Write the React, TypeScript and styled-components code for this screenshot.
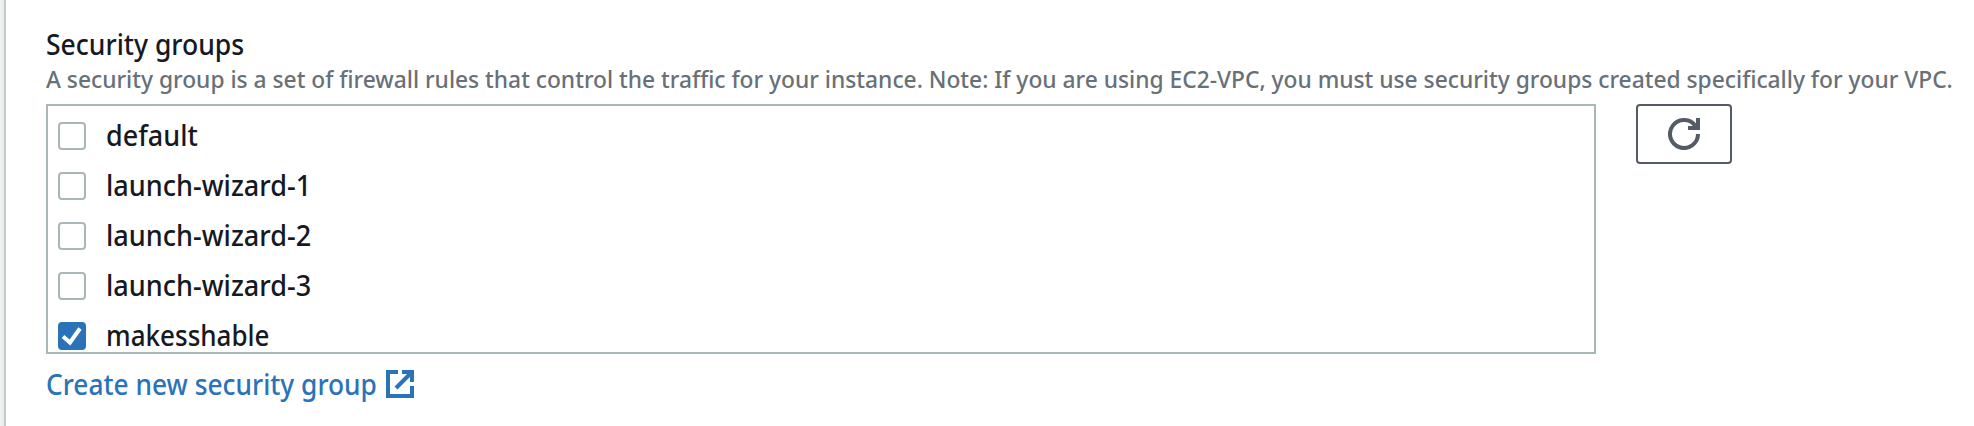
import React from 'react';
import styled, { createGlobalStyle } from 'styled-components';

const GlobalStyle = createGlobalStyle`
  * { box-sizing: border-box; }
  body {
    margin: 0;
    background: #fff;
    font-family: 'Noto Sans', 'Open Sans', sans-serif;
    font-weight: 500;
    color: #16191f;
  }
`;

const Page = styled.div`
  display: flex;
  height: 426px;
  overflow: hidden;
`;

const Gutter = styled.div`
  flex: none;
  width: 6px;
  background: linear-gradient(to right, #f0f2f2 0, #eaecec 4px, #c6c9c9 4px, #c6c9c9 6px);
`;

const Panel = styled.section`
  flex: 1;
  min-width: 0;
  padding: 26px 0 0 40px;
`;

/* Narrows the typeface slightly while reserving the narrowed width in the flow. */
const Condensed = styled.span<{ $width: number; $scale: number }>`
  display: block;
  width: ${(p) => p.$width}px;
  white-space: nowrap;
  transform: scaleX(${(p) => p.$scale});
  transform-origin: left center;
`;

const Title = styled.h2`
  margin: 0;
  font-size: 28px;
  font-weight: 500;
  line-height: 36px;
`;

const Description = styled.p`
  margin: 1px 0 0;
  font-size: 24px;
  line-height: 32px;
  color: #687078;
`;

const Controls = styled.div`
  display: flex;
  align-items: flex-start;
  gap: 40px;
  margin-top: 9px;
`;

const GroupList = styled.ul`
  margin: 0;
  padding: 10px;
  width: 1550px;
  height: 250px;
  border: 2px solid #aab7b8;
  list-style: none;
  overflow: hidden;
`;

const GroupItem = styled.li`
  height: 50px;
`;

const GroupLabel = styled.label`
  display: flex;
  align-items: center;
  gap: 20px;
  height: 38px;
  font-size: 28px;
  line-height: 38px;
`;

const Checkbox = styled.span<{ $checked: boolean }>`
  display: flex;
  flex: none;
  width: 28px;
  height: 28px;
  margin-top: 2px;
  border: 2px solid ${(p) => (p.$checked ? '#2a73b8' : '#aab7b8')};
  border-radius: 4px;
  background: ${(p) => (p.$checked ? '#2a73b8' : '#fff')};
`;

const RefreshButton = styled.button`
  display: flex;
  align-items: center;
  justify-content: center;
  width: 96px;
  height: 60px;
  padding: 0;
  border: 2px solid #545b64;
  border-radius: 4px;
  background: #fff;
  color: #545b64;
`;

const CreateLink = styled.a`
  display: flex;
  align-items: center;
  gap: 10px;
  width: max-content;
  margin-top: 12px;
  font-size: 28px;
  line-height: 36px;
  color: #2a73b8;
`;

const CheckIcon = () => (
  <svg width="24" height="24" viewBox="2 2 24 24" fill="none" stroke="#fff" strokeWidth="4">
    <path d="M5 14.5 L12 20.5 L22 6.5" />
  </svg>
);

const RefreshIcon = () => (
  <svg width="32" height="32" viewBox="0 0 32 32" fill="none" stroke="currentColor" strokeWidth="4">
    <path d="M30 16 A14 14 0 1 1 27.5 8" />
    <path d="M30 0 V10 H20" />
  </svg>
);

const ExternalIcon = () => (
  <svg width="28" height="28" viewBox="0 0 28 28" fill="none" stroke="currentColor" strokeWidth="4">
    <path d="M12 2 H2 V26 H26 V16" />
    <path d="M16 2 H26 V12" />
    <path d="M10 18 L25 3" />
  </svg>
);

const groups = [
  { name: 'default', checked: false, width: 92, scale: 0.963 },
  { name: 'launch-wizard-1', checked: false, width: 206, scale: 0.967 },
  { name: 'launch-wizard-2', checked: false, width: 206, scale: 0.967 },
  { name: 'launch-wizard-3', checked: false, width: 206, scale: 0.967 },
  { name: 'makesshable', checked: true, width: 164, scale: 0.929 },
];

export default function App() {
  return (
    <Page>
      <GlobalStyle />
      <Gutter />
      <Panel>
        <Title>
          <Condensed $width={198} $scale={0.947}>Security groups</Condensed>
        </Title>
        <Description>
          <Condensed $width={1908} $scale={0.949}>
            A security group is a set of firewall rules that control the traffic for your instance. Note: If you are
            using EC2-VPC, you must use security groups created specifically for your VPC.
          </Condensed>
        </Description>
        <Controls>
          <GroupList>
            {groups.map((group) => (
              <GroupItem key={group.name}>
                <GroupLabel>
                  <Checkbox $checked={group.checked}>{group.checked && <CheckIcon />}</Checkbox>
                  <Condensed $width={group.width} $scale={group.scale}>{group.name}</Condensed>
                </GroupLabel>
              </GroupItem>
            ))}
          </GroupList>
          <RefreshButton aria-label="Refresh">
            <RefreshIcon />
          </RefreshButton>
        </Controls>
        <CreateLink>
          <Condensed $width={330} $scale={0.94}>Create new security group</Condensed>
          <ExternalIcon />
        </CreateLink>
      </Panel>
    </Page>
  );
}
